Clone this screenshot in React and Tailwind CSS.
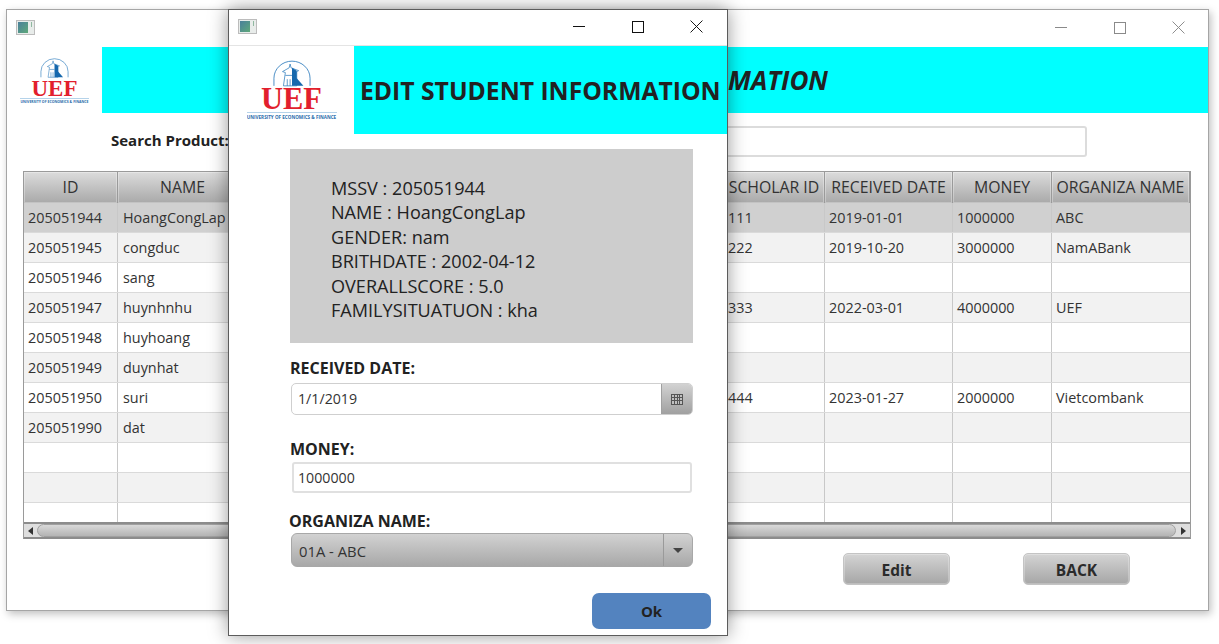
import React from 'react';

const students = [
    { id: '205051944', name: 'HoangCongLap', scholar: '111', date: '2019-01-01', money: '1000000', org: 'ABC' },
    { id: '205051945', name: 'congduc', scholar: '222', date: '2019-10-20', money: '3000000', org: 'NamABank' },
    { id: '205051946', name: 'sang' },
    { id: '205051947', name: 'huynhnhu', scholar: '333', date: '2022-03-01', money: '4000000', org: 'UEF' },
    { id: '205051948', name: 'huyhoang' },
    { id: '205051949', name: 'duynhat' },
    { id: '205051950', name: 'suri', scholar: '444', date: '2023-01-27', money: '2000000', org: 'Vietcombank' },
    { id: '205051990', name: 'dat' },
    {},
    {},
    {},
];

const columns = 'grid grid-cols-[94px_130px_476px_101px_128px_99px_138px]';

const WindowIcon = () => (
    <div className="w-[19px] h-[15px] border border-[#bcbcbc] bg-[#e8ecea] p-px flex gap-[3px] -mt-[2px]">
        <div className="w-[10px] h-full bg-gradient-to-br from-[#4b7f9a] to-[#5fa878]"></div>
        <div className="w-px h-[5px] bg-[#8fb8a0]"></div>
    </div>
);

const Logo = ({ large }) => (
    <div className={`flex flex-col items-center ${large ? 'w-[90px]' : 'w-[69px]'}`}>
        <svg viewBox="0 0 40 28" className={large ? 'w-[38px] h-[27px]' : 'w-[29px] h-[20px]'} fill="none">
            <path d="M1 27 V19 A19 18 0 0 1 39 19 V27" stroke="#2f7dbd" strokeWidth="0.9" />
            <path d="M18 4 L19 8 L27 11 L25 12 L25 27 L11 27 L13 13 L10 12 L17 8 Z" fill="#ffffff" stroke="#2f7dbd" strokeWidth="0.8" />
            <path d="M20 8 L25 11 L25 19 L32 27 L20 27 Z" fill="#1668ad" />
            <path d="M13 16 H20 M15 20 V27 M18 20 V27" stroke="#2f7dbd" strokeWidth="0.8" />
        </svg>
        <div className={`font-['Liberation_Serif',serif] font-bold text-[#e21f2d] leading-none ${large ? 'text-[30.5px] -mt-[3px]' : 'text-[23px] -mt-[1.5px]'}`}>
            UEF
        </div>
        <div className={`w-full border-t border-[#b5d3ea] text-[#2a6cab] text-center whitespace-nowrap leading-none overflow-hidden font-bold ${large ? 'text-[4.6px] pt-[2px] -mt-[2px]' : 'text-[3.5px] pt-[1px] -mt-[1.5px]'}`}>
            UNIVERSITY OF ECONOMICS &amp; FINANCE
        </div>
    </div>
);

const GrayButton = ({ children }) => (
    <button className="w-[107px] h-[32px] pt-[3px] rounded-[5px] border border-[#c4c4c4] bg-gradient-to-b from-[#d4d4d4] to-[#a6a6a6] text-[15.5px] font-bold text-[#2b2b2b] shadow-[inset_0_0_0_1px_rgba(255,255,255,0.25)]">
        {children}
    </button>
);

const HeaderCell = ({ children }) => (
    <div className="h-[31px] border-r border-[#9a9a9a] bg-gradient-to-b from-[#dcdcdc] to-[#a9a9a9] shadow-[inset_0_0_0_1px_rgba(255,255,255,0.3)] flex items-center justify-center text-[15.8px] whitespace-nowrap overflow-hidden">
        {children}
    </div>
);

const BackWindow = () => (
    <div className="absolute left-[6px] top-[9px] w-[1203px] h-[602px] bg-white border border-[#a5a5a5] shadow-[2px_3px_8px_rgba(0,0,0,0.25)] flex flex-col">
        <div className="h-[37px] shrink-0 flex items-center justify-between pl-[9px]">
            <WindowIcon />
            <div className="flex items-center text-[#8a8a8a] -mt-[2px]">
                <div className="w-[59px] flex justify-center">
                    <div className="w-[12px] h-px bg-[#8a8a8a]"></div>
                </div>
                <div className="w-[59px] flex justify-center">
                    <div className="w-[12px] h-[12px] border border-[#8a8a8a]"></div>
                </div>
                <div className="w-[59px] flex justify-center">
                    <svg viewBox="0 0 12 12" className="w-[13px] h-[13px]" stroke="#8a8a8a" strokeWidth="0.9">
                        <path d="M0.5 0.5 L11.5 11.5 M11.5 0.5 L0.5 11.5" />
                    </svg>
                </div>
            </div>
        </div>

        <div className="h-[66px] shrink-0 flex">
            <div className="w-[95px] shrink-0 flex justify-center items-center pt-[2px]">
                <Logo />
            </div>
            <div className="flex-1 bg-[#00ffff] flex items-center justify-end pr-[380px] pt-px">
                <span className="text-[26px] font-bold italic text-[#222] whitespace-nowrap">EDIT STUDENT INFORMATION</span>
            </div>
        </div>

        <div className="h-[58px] shrink-0 flex items-start pl-[104px] pr-[121px] pt-[13px]">
            <span className="text-[15px] font-bold text-[#222] leading-[28px] w-[300px] shrink-0">Search Product:</span>
            <div className="flex-1 h-[31px] rounded-[3px] border-2 border-[#dcdcdc] bg-white"></div>
        </div>

        <div className="ml-[16px] w-[1168px] border border-[#9a9a9a] border-b-[#8c8c8c] bg-white text-[#333]">
            <div className={columns}>
                <HeaderCell>ID</HeaderCell>
                <HeaderCell>NAME</HeaderCell>
                <HeaderCell></HeaderCell>
                <HeaderCell>SCHOLAR ID</HeaderCell>
                <HeaderCell>RECEIVED DATE</HeaderCell>
                <HeaderCell>MONEY</HeaderCell>
                <HeaderCell>ORGANIZA NAME</HeaderCell>
            </div>
            <div className="h-[319px] overflow-hidden">
                {students.map((s, i) => (
                    <div
                        key={i}
                        className={`${columns} h-[30px] text-[14.4px] leading-[29px] border-b border-[#dadada] ${i === 0 ? 'bg-[#d0d0d0]' : i % 2 === 1 ? 'bg-[#f2f2f2]' : 'bg-white'}`}
                    >
                        <div className="pl-[4px] border-r border-[#c8c8c8]">{s.id}</div>
                        <div className="pl-[5px] border-r border-[#c8c8c8]">{s.name}</div>
                        <div className="border-r border-[#c8c8c8]"></div>
                        <div className="pl-[4px] border-r border-[#c8c8c8]">{s.scholar}</div>
                        <div className="pl-[4px] border-r border-[#c8c8c8]">{s.date}</div>
                        <div className="pl-[4px] border-r border-[#c8c8c8]">{s.money}</div>
                        <div className="pl-[4px]">{s.org}</div>
                    </div>
                ))}
            </div>
            <div className="h-[16px] flex items-center border-t-2 border-b border-[#8c8c8c] bg-[#dedede]">
                <div className="w-[13px] flex justify-center">
                    <div className="w-0 h-0 border-y-[4px] border-y-transparent border-r-[5px] border-r-[#333]"></div>
                </div>
                <div className="flex-1 h-full rounded-full border border-[#a0a0a0] bg-gradient-to-b from-[#d9d9d9] to-[#b4b4b4]"></div>
                <div className="w-[14px] flex justify-center">
                    <div className="w-0 h-0 border-y-[4px] border-y-transparent border-l-[5px] border-l-[#333]"></div>
                </div>
            </div>
        </div>

        <div className="flex justify-end gap-[73px] pr-[78px] pt-[14px]">
            <GrayButton>Edit</GrayButton>
            <GrayButton>BACK</GrayButton>
        </div>
    </div>
);

const EditDialog = () => (
    <div className="absolute left-[228px] top-[9px] w-[500px] h-[627px] bg-white border border-[#5c5c5c] shadow-[0_0_18px_rgba(0,0,0,0.4)] flex flex-col">
        <div className="h-[36px] shrink-0 flex items-center justify-between pl-[9px] border-b border-[#e4e4e4]">
            <WindowIcon />
            <div className="flex items-center -mt-[2px] -ml-px pr-px">
                <div className="w-[59px] flex justify-center">
                    <div className="w-[12px] h-px bg-[#111]"></div>
                </div>
                <div className="w-[59px] flex justify-center">
                    <div className="w-[12px] h-[12px] border border-[#111]"></div>
                </div>
                <div className="w-[59px] flex justify-center">
                    <svg viewBox="0 0 12 12" className="w-[13px] h-[13px]" stroke="#111" strokeWidth="0.9">
                        <path d="M0.5 0.5 L11.5 11.5 M11.5 0.5 L0.5 11.5" />
                    </svg>
                </div>
            </div>
        </div>

        <div className="h-[88px] shrink-0 flex">
            <div className="w-[125px] shrink-0 flex justify-center items-center">
                <Logo large />
            </div>
            <div className="flex-1 bg-[#00ffff] flex items-center pl-[6px] pt-[2px]">
                <span className="text-[24.7px] font-bold text-[#222] whitespace-nowrap">EDIT STUDENT INFORMATION</span>
            </div>
        </div>

        <div className="mt-[15px] ml-[61px] w-[403px] h-[194px] bg-[#cdcdcd] pl-[41px] pt-[26.5px] text-[18.1px] leading-[24.6px] text-[#222]">
            <div>MSSV : 205051944</div>
            <div>NAME : HoangCongLap</div>
            <div>GENDER: nam</div>
            <div>BRITHDATE : 2002-04-12</div>
            <div>OVERALLSCORE : 5.0</div>
            <div>FAMILYSITUATUON : kha</div>
        </div>

        <div className="ml-[61px] mt-[15px] text-[16px] font-bold leading-[20px] text-[#222]">RECEIVED DATE:</div>
        <div className="ml-[62px] mt-[5px] w-[402px] h-[32px] flex rounded-[5px] border border-[#cfcfcf] overflow-hidden">
            <div className="flex-1 pl-[6px] text-[14.2px] leading-[30px] text-[#333]">1/1/2019</div>
            <div className="w-[31px] bg-gradient-to-b from-[#d2d2d2] to-[#a0a0a0] border-l border-[#a0a0a0] flex items-center justify-center">
                <div className="w-[12px] h-[11px] grid grid-cols-4 gap-px bg-[#555] p-px">
                    {Array.from({ length: 12 }).map((_, i) => <div key={i} className="bg-[#c0c0c0]"></div>)}
                </div>
            </div>
        </div>

        <div className="ml-[61px] mt-[24px] text-[16px] font-bold leading-[20px] text-[#222]">MONEY:</div>
        <div className="ml-[63px] mt-[3px] w-[400px] h-[31px] rounded-[3px] border-2 border-[#e0e0e0] pl-[4px] text-[14.2px] leading-[27px] text-[#333]">1000000</div>

        <div className="ml-[60px] mt-[18px] text-[16px] font-bold leading-[20px] text-[#222]">ORGANIZA NAME:</div>
        <div className="ml-[62px] mt-[2px] w-[402px] h-[34px] flex rounded-[6px] border border-[#a8a8a8] bg-gradient-to-b from-[#d2d2d2] to-[#a8a8a8] overflow-hidden">
            <div className="flex-1 pl-[7px] text-[14.8px] leading-[34px] text-[#333]">01A - ABC</div>
            <div className="w-[29px] border-l border-[#9a9a9a] flex items-center justify-center">
                <div className="w-0 h-0 border-x-[5px] border-x-transparent border-t-[5px] border-t-[#444]"></div>
            </div>
        </div>

        <div className="flex justify-end pr-[16px] mt-[26px]">
            <button className="w-[119px] h-[36px] rounded-[7px] bg-[#5383bf] text-[15px] font-bold text-[#222]">Ok</button>
        </div>
    </div>
);

export default function App() {
    return (
        <div className="relative w-[1219px] h-[644px] overflow-hidden bg-white font-['Open_Sans',sans-serif]">
            <BackWindow />
            <EditDialog />
        </div>
    );
}
